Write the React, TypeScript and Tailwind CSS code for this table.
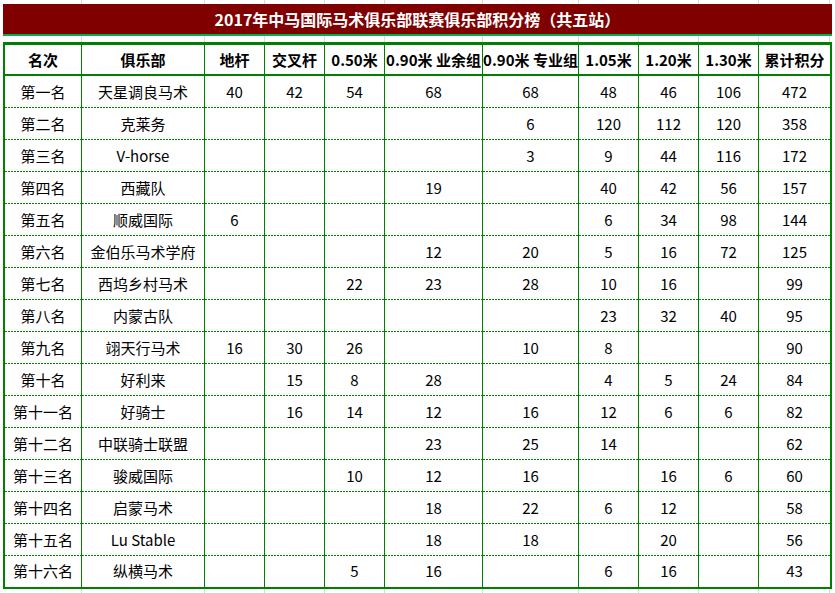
const widths = ['w-[77px]', 'w-[123px]', 'w-[60px]', 'w-[60px]', 'w-[60px]', 'w-[98px]', 'w-[96px]', 'w-[60px]', 'w-[60px]', 'w-[60px]', 'w-[71px]'];

const headers = ['名次', '俱乐部', '地杆', '交叉杆', '0.50米', '0.90米 业余组', '0.90米 专业组', '1.05米', '1.20米', '1.30米', '累计积分'];

type Row = (string | number | null)[];

const rows: Row[] = [
  ['第一名', '天星调良马术', 40, 42, 54, 68, 68, 48, 46, 106, 472],
  ['第二名', '克莱务', null, null, null, null, 6, 120, 112, 120, 358],
  ['第三名', 'V-horse', null, null, null, null, 3, 9, 44, 116, 172],
  ['第四名', '西藏队', null, null, null, 19, null, 40, 42, 56, 157],
  ['第五名', '顺威国际', 6, null, null, null, null, 6, 34, 98, 144],
  ['第六名', '金伯乐马术学府', null, null, null, 12, 20, 5, 16, 72, 125],
  ['第七名', '西坞乡村马术', null, null, 22, 23, 28, 10, 16, null, 99],
  ['第八名', '内蒙古队', null, null, null, null, null, 23, 32, 40, 95],
  ['第九名', '翊天行马术', 16, 30, 26, null, 10, 8, null, null, 90],
  ['第十名', '好利来', null, 15, 8, 28, null, 4, 5, 24, 84],
  ['第十一名', '好骑士', null, 16, 14, 12, 16, 12, 6, 6, 82],
  ['第十二名', '中联骑士联盟', null, null, null, 23, 25, 14, null, null, 62],
  ['第十三名', '骏威国际', null, null, 10, 12, 16, null, 16, 6, 60],
  ['第十四名', '启蒙马术', null, null, null, 18, 22, 6, 12, null, 58],
  ['第十五名', 'Lu Stable', null, null, null, 18, 18, null, 20, null, 56],
  ['第十六名', '纵横马术', null, null, 5, 16, null, 6, 16, null, 43],
];

// excel sheet gridlines peeking out around the table
function GridStrip({ h }: { h: string }) {
  return (
    <div className={`flex ${h}`}>
      <div className="w-[2px] shrink-0" />
      {widths.map((w, i) => (
        <div key={i} className={`${w} shrink-0 border-r border-[#dadada]`} />
      ))}
    </div>
  );
}

export default function App() {
  return (
    <div className="w-[835px] h-[593px] overflow-hidden bg-white text-black font-['Noto_Sans_CJK_SC','Noto_Sans',sans-serif]">
      <div className="ml-[3px] w-[829px]">
        <GridStrip h="h-[4px]" />
        <div className="h-[30px] bg-[#800000] flex items-center justify-center text-white font-bold text-[16px] whitespace-nowrap">
          2017年中马国际马术俱乐部联赛俱乐部积分榜（共五站）
        </div>
        <div className="h-[2px] bg-[#00b050]" />
        <GridStrip h="h-[6px]" />
        <div className="h-px bg-[#008000]" />

        <div className="border-2 border-[#008000]">
          <div className="flex h-[31px] border-b-2 border-[#008000] text-[15px] font-bold">
            {headers.map((t, i) => (
              <div
                key={i}
                className={`${widths[i]} shrink-0 flex items-center justify-center whitespace-nowrap pt-[2px] ${i < 10 ? 'border-r border-[#008000]' : ''}`}
              >
                {t}
              </div>
            ))}
          </div>

          {rows.map((r, ri) => {
            const last = ri === rows.length - 1;
            return (
              <div key={ri} className={`flex text-[15px] ${last ? 'h-[31px]' : 'h-[32px]'}`}>
                {r.map((v, ci) => (
                  <div
                    key={ci}
                    className={`${widths[ci]} shrink-0 flex items-center justify-center whitespace-nowrap ${ci < 10 ? 'border-r border-[#008000]' : ''} ${last ? '' : 'bg-[image:repeating-linear-gradient(to_right,#008000_0_2px,transparent_2px_3px)] bg-[length:100%_1px] bg-bottom bg-no-repeat'}`}
                  >
                    {v ?? ''}
                  </div>
                ))}
              </div>
            );
          })}
        </div>
        <GridStrip h="h-[10px]" />
      </div>
    </div>
  );
}
